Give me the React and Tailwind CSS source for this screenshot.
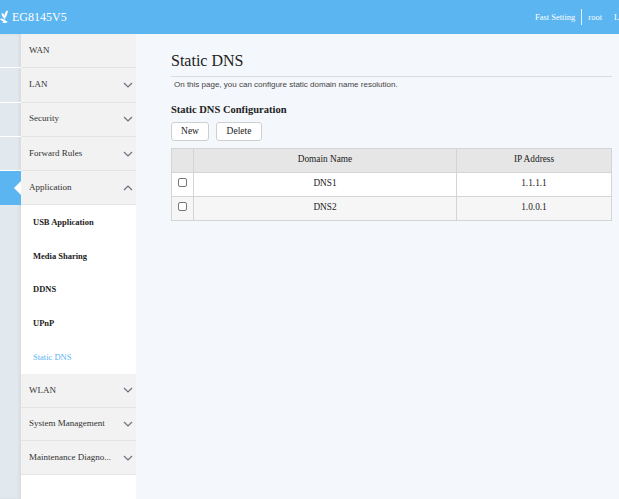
import { useState } from "react";

const serif = { fontFamily: '"Liberation Serif", "Times New Roman", serif' };

function Chevron({ up }) {
  return (
    <svg width="10" height="6" viewBox="0 0 10 6" className="text-gray-500">
      {up ? (
        <polyline points="1,5 5,1 9,5" fill="none" stroke="currentColor" strokeWidth="1.2" />
      ) : (
        <polyline points="1,1 5,5 9,1" fill="none" stroke="currentColor" strokeWidth="1.2" />
      )}
    </svg>
  );
}

function Logo() {
  return (
    <svg width="11" height="14" viewBox="0 0 11 14" className="text-white">
      <ellipse cx="6" cy="4" rx="1.2" ry="3.6" fill="currentColor" transform="rotate(20 6 4)" />
      <ellipse cx="3.5" cy="6" rx="1.1" ry="3.3" fill="currentColor" transform="rotate(-30 3.5 6)" />
      <ellipse cx="3" cy="10" rx="1" ry="3" fill="currentColor" transform="rotate(-70 3 10)" />
      <ellipse cx="5" cy="12" rx="0.9" ry="2.6" fill="currentColor" transform="rotate(-95 5 12)" />
    </svg>
  );
}

const topMenu = ["WAN", "LAN", "Security", "Forward Rules"];
const subMenu = ["USB Application", "Media Sharing", "DDNS", "UPnP", "Static DNS"];
const bottomMenu = ["WLAN", "System Management", "Maintenance Diagno..."];

function MenuRow({ label, chevron = true, up = false, tall = true }) {
  return (
    <div
      className={`flex ${tall ? "h-[34.3px]" : "h-[33.7px]"} items-center justify-between border-b border-[#e4e4e4] bg-[#f2f2f2] pl-2 pr-[3px] text-[9px] text-[#333]`}
    >
      <span>{label}</span>
      {chevron && <Chevron up={up} />}
    </div>
  );
}

export default function App() {
  const [rows] = useState([
    { name: "DNS1", ip: "1.1.1.1" },
    { name: "DNS2", ip: "1.0.0.1" },
  ]);

  return (
    <div className="flex h-[499px] w-[619px] flex-col overflow-hidden bg-[#f4f7fb]" style={serif}>
      {/* header */}
      <div className="flex h-[34px] shrink-0 items-center justify-between bg-[#5ab5f1] text-white">
        <div className="flex items-center gap-[1px]">
          <Logo />
          <span className="text-[12px]">EG8145V5</span>
        </div>
        <div className="flex items-center text-[8.5px]">
          <span>Fast Setting</span>
          <span className="mx-[6px] h-[16px] w-px bg-white/80" />
          <span>root</span>
          <span className="ml-[12px] w-[5px] overflow-hidden">L</span>
        </div>
      </div>

      <div className="flex min-h-0 flex-1">
        {/* left strip */}
        <div className="flex w-[21px] shrink-0 flex-col bg-[#e2e9ee] shadow-[inset_-2px_0_3px_rgba(0,0,0,0.06)]">
          {topMenu.map((m) => (
            <div key={m} className="h-[34.3px] border-b border-white" />
          ))}
          <div className="relative h-[34.3px] bg-[#5ab5f1]">
            <span className="absolute right-0 top-[10px] h-0 w-0 border-y-[7px] border-r-[7px] border-y-transparent border-r-white" />
          </div>
        </div>

        {/* sidebar */}
        <div className="flex w-[115px] shrink-0 flex-col bg-white">
          {topMenu.map((m) => (
            <MenuRow key={m} label={m} chevron={m !== "WAN"} />
          ))}
          <MenuRow label="Application" up />
          <div className="flex flex-col bg-white">
            {subMenu.map((s) => (
              <div
                key={s}
                className={`flex h-[33.7px] items-center pl-3 text-[8.5px] ${
                  s === "Static DNS" ? "text-[#5ab5f1]" : "font-bold text-[#222]"
                }`}
              >
                {s}
              </div>
            ))}
          </div>
          {bottomMenu.map((m) => (
            <MenuRow key={m} label={m} tall={false} />
          ))}
        </div>

        {/* content */}
        <div className="flex-1 pl-[35px] pr-[7px] pt-[15px]">
          <h1 className="text-[16px] text-[#222]">Static DNS</h1>
          <div
            className="mt-[3px] border-t border-[#dcdcdc] pt-[2px] pl-[3px] text-[8px] text-[#444]"
            style={{ fontFamily: '"Liberation Sans", Arial, sans-serif' }}
          >
            On this page, you can configure static domain name resolution.
          </div>
          <div className="mt-[11px] text-[10.5px] font-bold text-[#222]">Static DNS Configuration</div>
          <div className="mt-[4px] flex gap-[7px]">
            <button className="h-[19px] w-[38px] rounded-[3px] border border-[#cfcfcf] bg-white text-[9.5px] text-[#222]">New</button>
            <button className="h-[19px] w-[46px] rounded-[3px] border border-[#cfcfcf] bg-white text-[9.5px] text-[#222]">Delete</button>
          </div>
          <table className="mt-[7px] w-full border-collapse text-[9.3px] text-[#222]">
            <thead>
              <tr className="h-[24px] bg-[#e6e6e6]">
                <th className="w-[22px] border border-[#d4d4d4] font-normal"></th>
                <th className="border border-[#d4d4d4] font-normal">Domain Name</th>
                <th className="w-[155px] border border-[#d4d4d4] font-normal">IP Address</th>
              </tr>
            </thead>
            <tbody>
              {rows.map((r, i) => (
                <tr key={r.name} className={`h-[24px] ${i % 2 ? "bg-[#f6f6f6]" : "bg-white"}`}>
                  <td className="border border-[#d4d4d4] text-center">
                    <span className="inline-block h-[9px] w-[9px] translate-y-[1px] rounded-[2px] border border-[#777] bg-white" />
                  </td>
                  <td className="border border-[#d4d4d4] text-center">{r.name}</td>
                  <td className="border border-[#d4d4d4] text-center">{r.ip}</td>
                </tr>
              ))}
            </tbody>
          </table>
        </div>
      </div>
    </div>
  );
}
